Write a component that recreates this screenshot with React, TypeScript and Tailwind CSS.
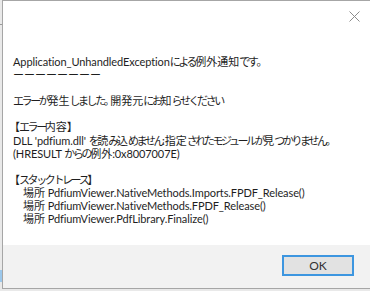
import React from 'react';

const lines: { text: string; indent?: boolean }[] = [
  { text: 'Application_UnhandledExceptionによる例外通知です。' },
  { text: 'ーーーーーーーー' },
  { text: '' },
  { text: 'エラーが発生しました。開発元にお知らせください' },
  { text: '' },
  { text: '【エラー内容】' },
  { text: "DLL 'pdfium.dll' を読み込めません:指定されたモジュールが見つかりません。" },
  { text: '(HRESULT からの例外:0x8007007E)' },
  { text: '' },
  { text: '【スタックトレース】' },
  { text: '場所 PdfiumViewer.NativeMethods.Imports.FPDF_Release()', indent: true },
  { text: '場所 PdfiumViewer.NativeMethods.FPDF_Release()', indent: true },
  { text: '場所 PdfiumViewer.PdfLibrary.Finalize()', indent: true },
];

// Yu Gothic UI style: kanji full width, kana proportional and narrow
function runClass(run: string) {
  if (run === '【') return '-ml-[4px] tracking-[-1px]';
  if (run === '】') return 'tracking-[-4px]';
  if (run === '。' || run === '、') return 'tracking-[-4.5px]';
  if (/^[\u4e00-\u9fffー]+$/.test(run)) return 'tracking-[0px]';
  if (/^[\u3040-\u30fe]+$/.test(run)) return 'tracking-[-2.4px]';
  return 'tracking-[-0.1px]';
}

function Line({ text }: { text: string }) {
  const runs = text.match(/【|】|。|、|[\u4e00-\u9fffー]+|[\u3040-\u30fe]+|[^\u3040-\u30fe\u4e00-\u9fffー【】。、]+/g) || [];
  return (
    <>
      {runs.map((r, i) => (
        <span key={i} className={runClass(r)}>
          {r}
        </span>
      ))}
    </>
  );
}

export default function App() {
  return (
    <div className="relative w-[370px] h-[291px] overflow-hidden bg-[#e9e9e9] flex flex-col font-['Lato','Noto_Sans_CJK_JP',sans-serif]">
      {/* stray bits of the window behind */}
      <div className="absolute left-0 top-[24px] w-[2px] h-px bg-[#9a9a9a]" />
      <div className="absolute left-0 top-[270px] w-[2px] h-[12px] bg-[#9cc8ec]" />

      <div className="ml-[2px] h-[289px] flex flex-col border-l border-t border-b border-[#a6a6a6] bg-white">
        <div className="relative flex-1 pl-[10px] pt-[54px]">
          <button className="absolute right-[10px] top-[9px] w-[12px] h-[12px] flex items-center justify-center">
            <svg width="11" height="11" viewBox="0 0 11 11">
              <path d="M0.5 0.5 L10.5 10.5 M10.5 0.5 L0.5 10.5" stroke="#8c8c8c" strokeWidth="1" fill="none" />
            </svg>
          </button>
          <div className="text-[11px] leading-[13.1px] text-[#1e1e1e] whitespace-pre">
            {lines.map((l, i) => (
              <div key={i} className={l.indent ? 'pl-[10px] h-[13.1px]' : 'h-[13.1px]'}>
                <Line text={l.text} />
              </div>
            ))}
          </div>
        </div>
        <div className="h-[43px] bg-[#f2f2f2] flex items-start justify-end pr-[16px] pt-[10px]">
          <button className="w-[72px] h-[21px] border-2 border-[#3d96e0] bg-[#e2e2e2] text-[12px] leading-none text-[#333] flex items-center justify-center">
            OK
          </button>
        </div>
      </div>
    </div>
  );
}
